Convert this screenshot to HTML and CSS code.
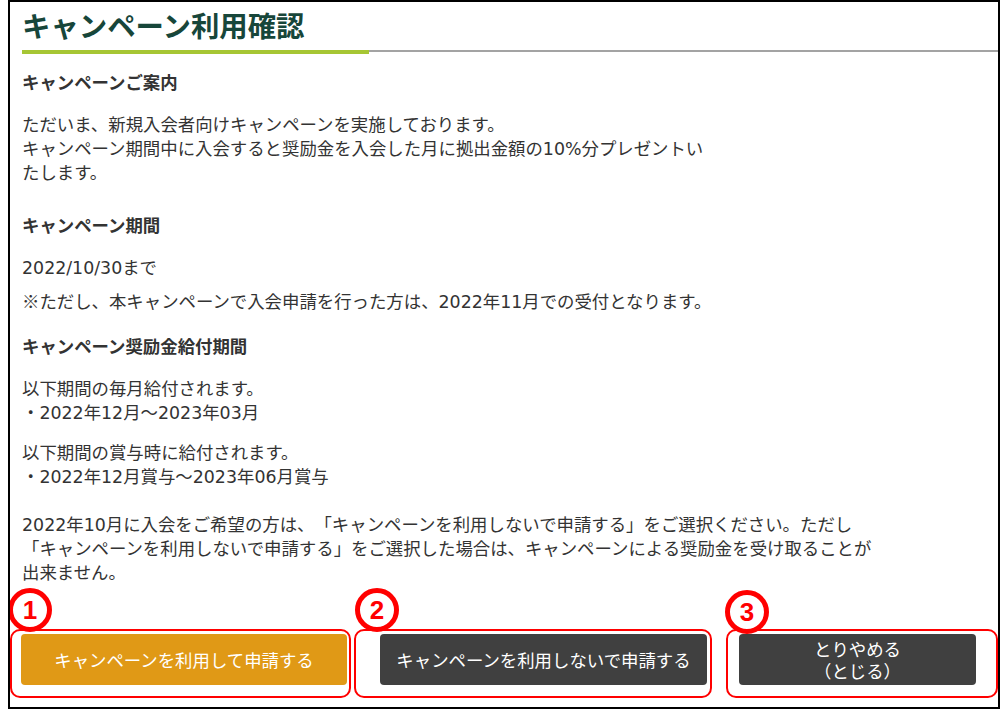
FILE: index.html
```html
<!DOCTYPE html>
<html lang="ja">
<head>
    <meta charset="UTF-8">
    <meta name="viewport" content="width=device-width, initial-scale=1.0">
    <title>キャンペーン利用確認</title>
    <link rel="stylesheet" href="styles.css">
</head>
<body>
    <div class="frame">
        <div class="title-bar">
            <h1>キャンペーン利用確認</h1>
        </div>

        <div class="content">
            <div class="section section-intro">
                <h2 class="sec-title">キャンペーンご案内</h2>
                <p class="text">ただいま、新規入会者向けキャンペーンを実施しております。<br>キャンペーン期間中に入会すると奨励金を入会した月に拠出金額の10%分プレゼントい<br>たします。</p>
            </div>

            <div class="section">
                <h2 class="sec-title">キャンペーン期間</h2>
                <p class="text text-close">2022/10/30まで</p>
                <p class="text"><span class="mark-char">※</span>ただし、本キャンペーンで入会申請を行った方は、2022年11月での受付となります。</p>
            </div>

            <div class="section">
                <h2 class="sec-title">キャンペーン奨励金給付期間</h2>
                <p class="text">以下期間の毎月給付されます。<br>・2022年12月～2023年03月</p>
                <p class="text">以下期間の賞与時に給付されます。<br>・2022年12月賞与～2023年06月賞与</p>
                <p class="text text-note">2022年10月に入会をご希望の方は、「キャンペーンを利用しないで申請する」をご選択ください。ただし<br>「キャンペーンを利用しないで申請する」をご選択した場合は、キャンペーンによる奨励金を受け取ることが<br>出来ません。</p>
            </div>
        </div>

        <div class="actions">
            <div class="mark mark-1">
                <span class="num">1</span>
                <button class="btn btn-apply">キャンペーンを利用して申請する</button>
            </div>
            <div class="mark mark-2">
                <span class="num">2</span>
                <button class="btn btn-dark">キャンペーンを利用しないで申請する</button>
            </div>
            <div class="mark mark-3">
                <span class="num">3</span>
                <button class="btn btn-dark btn-close">とりやめる<br>（とじる）</button>
            </div>
        </div>
    </div>
</body>
</html>
```

FILE: styles.css
```css
body {
    font-family: "DejaVu Sans", "Noto Sans CJK JP", sans-serif;
    background-color: #fff;
    color: #333;
    margin: 0;
    padding: 0;
    text-spacing-trim: space-all;
}

.frame {
    display: flex;
    flex-direction: column;
    margin-left: 8px;
    width: 992px;
    height: 709px;
    border: 2px solid #000;
    box-sizing: border-box;
    overflow: hidden;
}

/* page title with the green accent underline */
.title-bar {
    position: relative;
    margin-left: 12px;
    padding: 5px 0 7px;
    border-bottom: 2px solid #a3a3a3;
}

.title-bar::after {
    content: "";
    position: absolute;
    left: 0;
    bottom: -4px;
    width: 347px;
    height: 4px;
    background-color: #a6c634;
}

h1 {
    margin: 0;
    font-family: "Noto Sans CJK JP", sans-serif;
    font-size: 28.4px;
    line-height: 36px;
    font-weight: bold;
    color: #17463a;
}

.content {
    padding: 18px 12px 0;
}

.section {
    margin-bottom: 20px;
}

.section-intro {
    margin-bottom: 28px;
}

.sec-title {
    margin: 0 0 19px;
    font-family: "Noto Sans CJK JP", sans-serif;
    font-size: 17.4px;
    line-height: 24px;
    font-weight: bold;
    color: #333;
}

.text {
    margin: 0 0 16px;
    font-size: 17.4px;
    line-height: 24px;
}

.text:last-child {
    margin-bottom: 0;
}

.text-close {
    margin-bottom: 9px;
}

.text-note {
    margin-top: 24px;
}

.mark-char {
    font-family: "Noto Sans CJK JP", sans-serif;
}

/* buttons row, each button wrapped by a red marker box */
.actions {
    display: flex;
    align-items: flex-start;
    margin-top: 24px;
}

.mark {
    position: relative;
    display: flex;
    height: 69px;
    border: 2px solid #f00;
    border-radius: 10px;
    box-sizing: border-box;
}

.mark-1 {
    width: 341px;
    padding: 3px 2px 11px 9px;
}

.mark-2 {
    width: 358px;
    margin-left: 3px;
    padding: 3px 3px 11px 24px;
}

.mark-3 {
    width: 272px;
    margin-left: 14px;
    padding: 3px 20px 11px 11px;
}

.num {
    position: absolute;
    top: -43px;
    left: -4px;
    width: 44px;
    height: 44px;
    box-sizing: border-box;
    border: 5px solid #f00;
    border-radius: 50%;
    background-color: #fff;
    color: #f00;
    font-family: "Liberation Sans", Arial, sans-serif;
    font-size: 26px;
    font-weight: bold;
    line-height: 34px;
    text-align: center;
}

.mark-2 .num {
    left: -1px;
}

.mark-3 .num {
    left: -3px;
    top: -41px;
}

.btn {
    flex: 1;
    height: 51px;
    padding: 0;
    border: none;
    border-radius: 4px;
    color: #fff;
    font-family: "Noto Sans CJK JP", sans-serif;
    font-size: 17.4px;
    line-height: 22px;
    cursor: pointer;
}

.btn-apply {
    background-color: #e09916;
}

.btn-dark {
    background-color: #404040;
}
```
